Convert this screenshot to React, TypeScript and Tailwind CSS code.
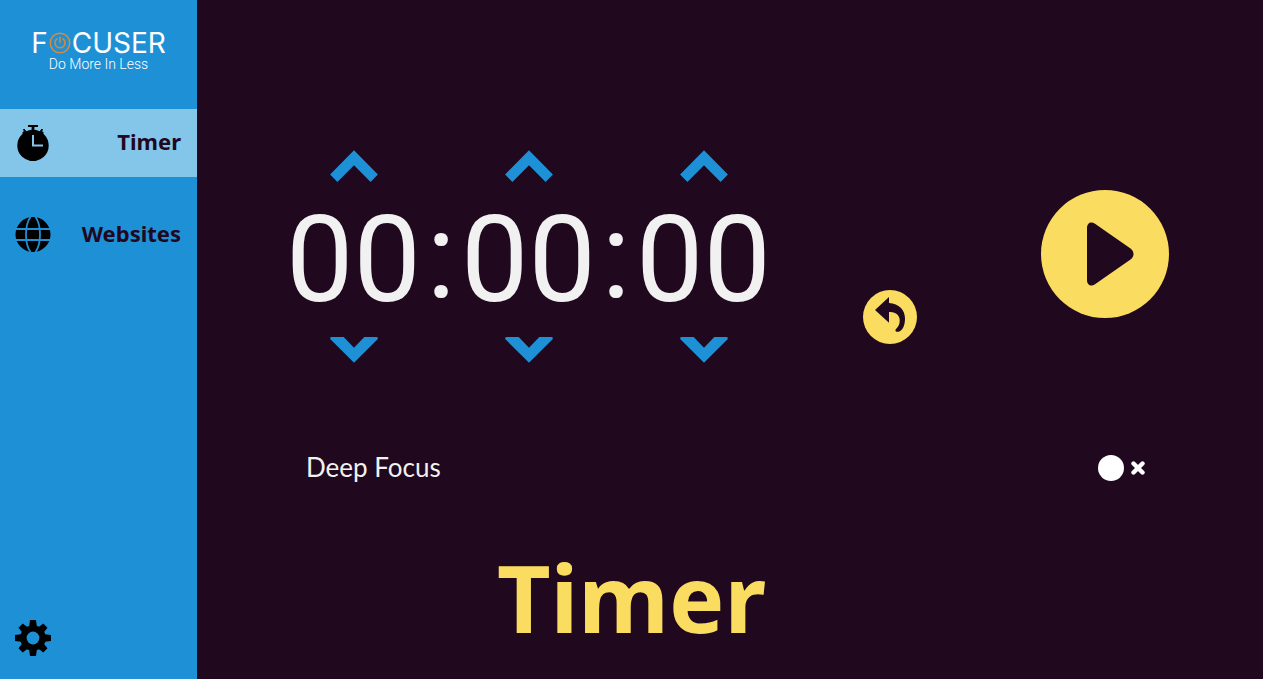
import { useState } from "react";

function StopwatchIcon() {
  return (
    <svg viewBox="0 0 36 36" className="size-9" aria-hidden="true">
      <circle cx="18" cy="20.5" r="15.7" fill="#000" />
      <path d="M13 0h10v2h-3.6v4h-2.8V2H13z" fill="#000" />
      <path d="M9 4l2.400 3-3 2.200-.6-1.700L9.600 6.300 8.600 5zM27 4l-2.400 3 3 2.200.6-1.700-1.800-1.200 1-1.300z" fill="#000" stroke="#000" />
      <path d="M18 10v10.500h10" fill="none" stroke="#84c5ea" strokeWidth="2" />
    </svg>
  );
}

function GlobeIcon() {
  return (
    <svg viewBox="0 0 36 36" className="size-9" aria-hidden="true">
      <circle cx="18" cy="17.500" r="17.500" fill="#000" />
      <g fill="none" stroke="#1e90d6" strokeWidth="1.800">
        <path d="M0 12h36M0 23h36" />
        <path d="M15.500 0C9.500 8 9.500 27 15.500 35M20.500 0c6 8 6 27 0 35" />
      </g>
    </svg>
  );
}

function GearIcon() {
  return (
    <svg viewBox="0 0 36 36" className="size-9" aria-hidden="true">
      <g fill="#000">
        <path d="M15 0h6l1 8h-8zM15 36h6l1-8h-8z" />
        <path d="M0 15v6l8 1v-8zM36 15v6l-8 1v-8z" />
        <path d="M15 .5h6l1 8h-8zM15 35.500h6l1-8h-8z" transform="rotate(45 18 18)" />
        <path d="M15 .5h6l1 8h-8zM15 35.500h6l1-8h-8z" transform="rotate(-45 18 18)" />
        <circle cx="18" cy="18" r="12.800" />
      </g>
      <circle cx="18" cy="18" r="6.400" fill="#1e90d6" />
    </svg>
  );
}

function PowerRing() {
  return (
    <svg viewBox="0 0 22 22" className="size-[22px]" fill="none" stroke="#d88a3c" aria-hidden="true">
      <circle cx="11" cy="11" r="9.800" strokeWidth="1.500" />
      <path d="M8 6.800a5 5 0 1 0 6 0" strokeWidth="1.500" strokeLinecap="round" />
      <path d="M11 5.200v5.300" strokeWidth="1.500" strokeLinecap="round" />
    </svg>
  );
}

function Logo() {
  return (
    <div className="flex h-[109px] flex-col items-center pt-[30px] text-white">
      <div className="flex items-center gap-px font-[Inter,sans-serif] text-[28px] leading-[26px]">
        <span>F</span>
        <PowerRing />
        <span>CUSER</span>
      </div>
      <div className="font-[Roboto,sans-serif] text-[14px] leading-4 font-light">Do More In Less</div>
    </div>
  );
}

type Unit = { name: string; max: number };
const units: Unit[] = [
  { name: "hours", max: 99 },
  { name: "minutes", max: 59 },
  { name: "seconds", max: 59 },
];

function Digits({ unit, value, onChange }: { unit: Unit; value: number; onChange: (v: number) => void }) {
  const size = unit.max + 1;
  return (
    <div className="flex w-[141px] flex-col items-center">
      <button type="button" aria-label={`Increase ${unit.name}`} onClick={() => onChange((value + 1) % size)}>
        <svg viewBox="0 0 48 32" className="block h-8 w-12" fill="#1e90d6">
          <path d="M24 .3 47.900 24.400 40.600 31.900 24 15.300 7.400 31.900.1 24.400z" />
        </svg>
      </button>
      <span className="pt-0.5 leading-[153px]">{String(value).padStart(2, "0")}</span>
      <button type="button" aria-label={`Decrease ${unit.name}`} onClick={() => onChange((value + size - 1) % size)}>
        <svg viewBox="0 0 48 26" className="block h-[26px] w-12" fill="#1e90d6">
          <path d="M1 0h12.700L24 10.700 34.300 0H47q1.200.8.6 2.300L24 25.700.4 2.300Q-.2.8 1 0z" />
        </svg>
      </button>
    </div>
  );
}

export default function App() {
  const [time, setTime] = useState([0, 0, 0]);
  const [deep, setDeep] = useState(false);
  const set = (i: number) => (v: number) => setTime(time.map((t, j) => (j === i ? v : t)));

  return (
    <div className="flex min-h-screen bg-[#20081e]">
      <aside className="flex w-[197px] shrink-0 flex-col bg-[#1e90d6]">
        <Logo />
        <nav className="flex flex-1 flex-col gap-6 font-['Noto_Sans',sans-serif] text-[22px] font-bold text-[#20081e]">
          <a href="#timer" aria-current="page" className="flex h-[68px] items-center justify-between bg-[#84c5ea] pr-4 pl-[15px]">
            <StopwatchIcon />
            <span className="pb-1">Timer</span>
          </a>
          <a href="#websites" className="flex h-[68px] items-center justify-between pr-4 pl-[15px]">
            <GlobeIcon />
            <span className="pb-1">Websites</span>
          </a>
          <a href="#settings" aria-label="Settings" className="mt-auto mb-[23px] ml-[15px] self-start">
            <GearIcon />
          </a>
        </nav>
      </aside>

      <main className="flex flex-1 flex-col pt-[150px]">
        <section className="flex items-start pr-[94px] pl-[86px]">
          <div className="flex items-center font-[Roboto,sans-serif] text-[120px] text-[#f1f1f1]">
            <Digits unit={units[0]} value={time[0]} onChange={set(0)} />
            <span className="w-[34px] text-center leading-[155px]">:</span>
            <Digits unit={units[1]} value={time[1]} onChange={set(1)} />
            <span className="w-[34px] text-center leading-[155px]">:</span>
            <Digits unit={units[2]} value={time[2]} onChange={set(2)} />
          </div>
          <button type="button" aria-label="Reset" onClick={() => setTime([0, 0, 0])} className="mt-[140px] ml-[89px]">
            <svg viewBox="0 0 54 54" className="block size-[54px]">
              <circle cx="27" cy="27" r="27" fill="#fadc60" />
              <path
                d="M12 20 26 7v6c10 .5 16 7 16 15.500 0 7-2.500 12.500-6.500 13.200-2 .3-3.600-.5-3-2 .6-1.200 3-2.700 3.900-6.200 1.600-6.500-2-12-10.400-11.500v10.700z"
                fill="#20081e"
              />
            </svg>
          </button>
          <button type="button" aria-label="Start" className="mt-10 ml-auto">
            <svg viewBox="0 0 128 128" className="block size-32">
              <circle cx="64" cy="64" r="64" fill="#fadc60" />
              <path
                d="M46 38c0-5 4-7 8-4.300L89.500 58.500c4 3 4 8 0 11L54 94.300c-4 2.700-8 .7-8-4.300z"
                fill="#20081e"
              />
            </svg>
          </button>
        </section>

        <label className="mt-[84px] mr-[118px] ml-[109px] flex cursor-pointer items-center justify-between font-[Lato,sans-serif] text-[26px] leading-10 text-[#f1f1f1]">
          Deep Focus
          <span className="flex items-center gap-[7px] pt-0.5">
            <input type="checkbox" checked={deep} onChange={() => setDeep(!deep)} className="peer sr-only" />
            <span className="size-[26px] rounded-full bg-white" />
            <svg viewBox="0 0 14 14" className="size-3.5" fill="none" stroke="#fff" strokeWidth="4.400" strokeLinecap="round">
              {deep ? <path d="M2 8l3 3 7-8" /> : <path d="M2.500 2.500l9 9M11.500 2.500l-9 9" />}
            </svg>
          </span>
        </label>

        <h1 className="mt-[50px] pr-[197px] text-center font-['Noto_Sans',sans-serif] text-[93px] leading-[120px] font-bold text-[#fadc60]">
          Timer
        </h1>
      </main>
    </div>
  );
}
